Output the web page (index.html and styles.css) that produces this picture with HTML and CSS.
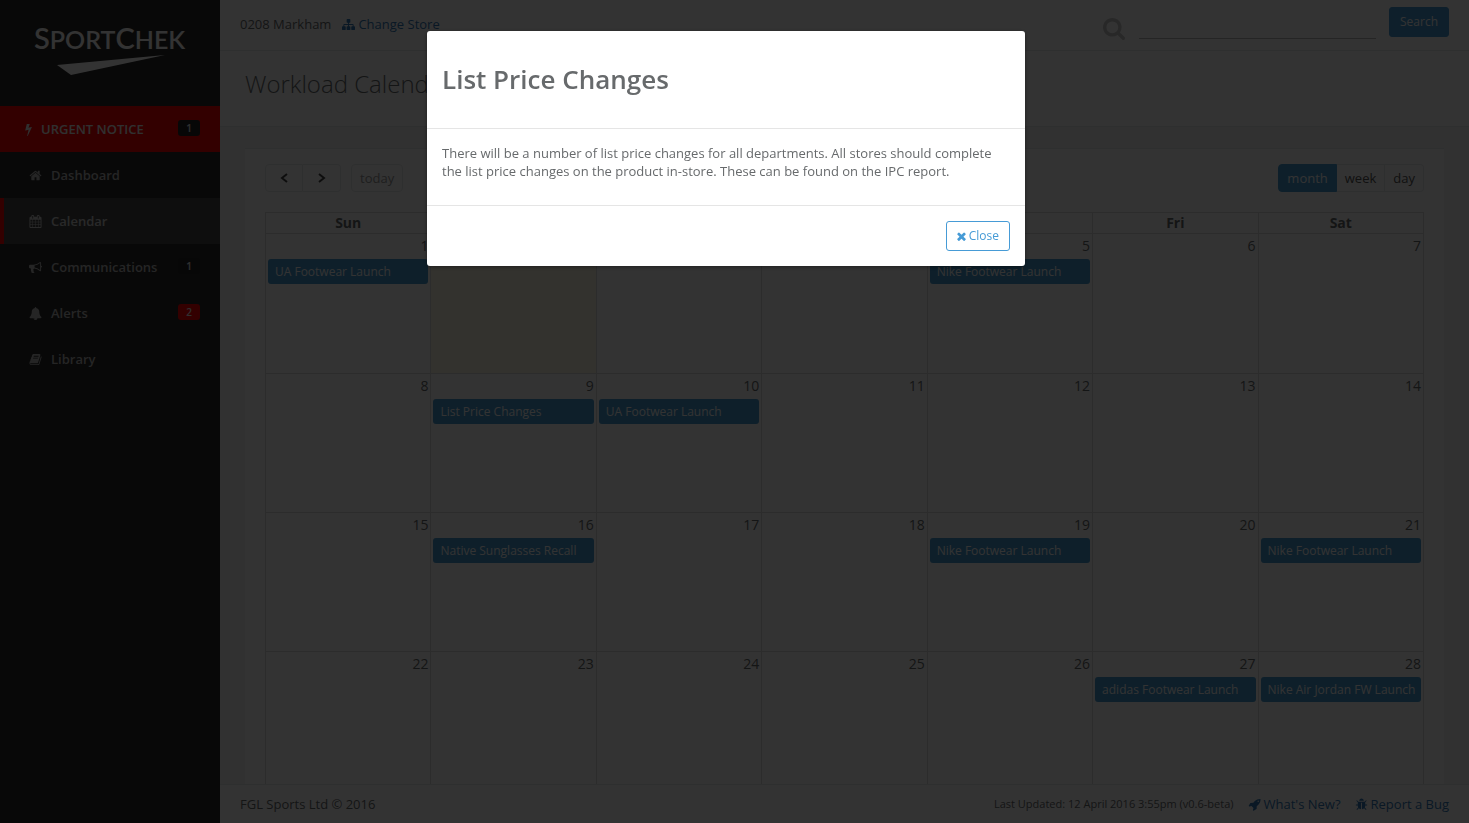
FILE: index.html
```html
<!DOCTYPE html>
<html lang="en">
<head>
<meta charset="utf-8">
<title>Workload Calendar</title>
<link rel="stylesheet" href="styles.css">
</head>
<body>
<div class="app">
  <aside class="sidebar">
    <div class="brand">
      <div class="brand-name"><span class="brand-cap">S</span>PORT<span class="brand-cap">C</span>HEK</div>
      <svg class="brand-mark" width="108" height="20" viewBox="0 0 108 20" aria-hidden="true"><path d="M0 10 L108 0 L14 20 Z"/></svg>
    </div>
    <nav class="nav">
      <a class="nav-item nav-urgent" href="#"><svg class="icon" viewBox="448 0 896 1792"><path d="M1333 566q18 20 7 44l-540 1157q-13 25-42 25-4 0-14-2-17-5-25.500-19t-4.500-30l197-808-406 101q-4 1-12 1-18 0-31-11-18-15-13-39l201-825q4-14 16-23t28-9h328q19 0 32 12.500t13 29.500q0 8-5 18l-171 463 396-98q8-2 12-2 19 0 34 15z"/></svg><span>URGENT NOTICE</span><span class="badge badge-dark">1</span></a>
      <a class="nav-item" href="#"><svg class="icon" viewBox="0 0 1792 1792"><path d="M1472 992v480q0 26-19 45t-45 19h-384v-384h-256v384h-384q-26 0-45-19t-19-45v-480q0-1 .5-3t.5-3l575-474 575 474q1 2 1 6zm223-69l-62 74q-8 9-21 11h-3q-13 0-21-7l-692-577-692 577q-12 8-24 7-13-2-21-11l-62-74q-8-10-7-23.500t11-21.500l719-599q32-26 76-26t76 26l244 204v-195q0-14 9-23t23-9h192q14 0 23 9t9 23v408l219 182q10 8 11 21.500t-7 23.500z"/></svg><span>Dashboard</span></a>
      <a class="nav-item nav-active" href="#"><svg class="icon" viewBox="0 0 1792 1792"><path d="M192 1664h288v-288h-288v288zm352 0h320v-288h-320v288zm-352-352h288v-320h-288v320zm352 0h320v-320h-320v320zm-352-384h288v-288h-288v288zm736 736h320v-288h-320v288zm-384-736h320v-288h-320v288zm768 736h288v-288h-288v288zm-384-352h320v-320h-320v320zm-352-864v-288q0-13-9.500-22.500t-22.500-9.500h-64q-13 0-22.500 9.500t-9.500 22.500v288q0 13 9.500 22.500t22.500 9.500h64q13 0 22.500-9.500t9.500-22.500zm736 864h288v-320h-288v320zm-384-384h320v-288h-320v288zm384 0h288v-288h-288v288zm32-480v-288q0-13-9.500-22.500t-22.500-9.500h-64q-13 0-22.500 9.500t-9.500 22.500v288q0 13 9.500 22.500t22.500 9.500h64q13 0 22.500-9.500t9.500-22.500zm384-64v1280q0 52-38 90t-90 38h-1408q-52 0-90-38t-38-90v-1280q0-52 38-90t90-38h128v-96q0-66 47-113t113-47h64q66 0 113 47t47 113v96h384v-96q0-66 47-113t113-47h64q66 0 113 47t47 113v96h128q52 0 90 38t38 90z"/></svg><span>Calendar</span></a>
      <a class="nav-item" href="#"><svg class="icon" viewBox="0 0 1792 1792"><path d="M1664 640q53 0 90.500 37.500t37.500 90.500-37.500 90.500-90.500 37.500v384q0 52-38 90t-90 38q-417-347-812-380-58 19-91 66t-31 100.500 40 92.500q-20 33-23 65.500t6 58 33.500 55 48 50 61.500 50.500q-29 58-111.500 83t-168.500 11.500-132-55.500q-7-23-29.500-87.500t-32-94.500-23-89-15-101 3.500-98.500 22-110.500h-122q-66 0-113-47t-47-113v-192q0-66 47-113t113-47h480q435 0 896-384 52 0 90 38t38 90v384zm-128 604v-954q-394 302-768 343v270q377 42 768 341z"/></svg><span>Communications</span><span class="badge badge-dark">1</span></a>
      <a class="nav-item" href="#"><svg class="icon" viewBox="0 0 1792 1792"><path d="M912 1696q0-16-16-16-59 0-101.500-42.500t-42.500-101.500q0-16-16-16t-16 16q0 73 51.500 124.500t124.500 51.500q16 0 16-16zm816-288q0 52-38 90t-90 38h-448q0 106-75 181t-181 75-181-75-75-181h-448q-52 0-90-38t-38-90q50-42 91-88t85-119.500 74.500-158.500 50-206 19.500-260q0-152 117-282.500t307-158.500q-8-19-8-39 0-40 28-68t68-28 68 28 28 68q0 20-8 39 190 28 307 158.500t117 282.500q0 139 19.500 260t50 206 74.500 158.500 85 119.500 91 88z"/></svg><span>Alerts</span><span class="badge badge-red">2</span></a>
      <a class="nav-item" href="#"><svg class="icon" viewBox="0 0 1792 1792"><path d="M1703 478q40 57 18 129l-275 906q-19 64-76.500 107.500t-122.500 43.500h-923q-77 0-148.500-53.500t-99.500-131.500q-24-67-2-127 0-4 3-27t4-37q1-8-3-21.500t-3-19.500q2-11 8-21t16.500-23.500 16.500-23.500q23-38 45-91.500t30-91.500q3-10 .5-30t-.5-28q3-11 17-28t17-23q21-36 42-92t25-90q1-9-2.500-32t.5-28q4-13 22-30.500t22-22.500q19-26 42.500-84.500t27.500-96.500q1-8-3-25.500t-2-26.500q2-8 9-18t18-23 17-21q8-12 16.500-30.500t15-35 16-36 19.500-32 26.500-23.500 36-11.500 47.500 5.500l-1 3q38-9 51-9h761q74 0 114 56t18 130l-274 906q-36 119-71.500 153.500t-128.500 34.500h-869q-27 0-38 15-11 16-1 43 24 70 144 70h923q29 0 56-15.500t35-41.500l300-987q7-22 5-57 38 15 59 43zm-1064 2q-4 13 2 22.500t20 9.500h608q13 0 25.500-9.500t16.500-22.500l21-64q4-13-2-22.500t-20-9.500h-608q-13 0-25.500 9.500t-16.500 22.500zm-83 256q-4 13 2 22.500t20 9.500h608q13 0 25.500-9.500t16.500-22.500l21-64q4-13-2-22.500t-20-9.500h-608q-13 0-25.500 9.500t-16.500 22.500z"/></svg><span>Library</span></a>
    </nav>
  </aside>

  <div class="page">
    <header class="topbar">
      <div class="store">
        <span>0208 Markham</span>
        <a class="link" href="#"><svg class="icon" viewBox="0 0 1792 1792"><path d="M1792 1248v320q0 40-28 68t-68 28h-320q-40 0-68-28t-28-68v-320q0-40 28-68t68-28h96v-192h-512v192h96q40 0 68 28t28 68v320q0 40-28 68t-68 28h-320q-40 0-68-28t-28-68v-320q0-40 28-68t68-28h96v-192h-512v192h96q40 0 68 28t28 68v320q0 40-28 68t-68 28h-320q-40 0-68-28t-28-68v-320q0-40 28-68t68-28h96v-192q0-52 38-90t90-38h512v-192h-96q-40 0-68-28t-28-68v-320q0-40 28-68t68-28h320q40 0 68 28t28 68v320q0 40-28 68t-68 28h-96v192h512q52 0 90 38t38 90v192h96q40 0 68 28t28 68z"/></svg>Change Store</a>
      </div>
      <form class="search">
        <label class="search-label" for="q" aria-label="Search"><svg class="search-icon" viewBox="64 128 1664 1664"><path d="M1216 832q0-185-131.500-316.500t-316.500-131.500-316.500 131.500-131.500 316.500 131.500 316.500 316.500 131.500 316.500-131.500 131.500-316.500zm512 832q0 52-38 90t-90 38q-54 0-90-38l-343-342q-179 124-399 124-143 0-273.500-55.500t-225-150-150-225-55.500-273.500 55.500-273.500 150-225 225-150 273.500-55.500 273.500 55.500 225 150 150 225 55.500 273.500q0 220-124 399l343 343q37 37 37 90z"/></svg></label>
        <input class="search-input" id="q" type="text">
        <button class="btn btn-primary" type="button">Search</button>
      </form>
    </header>
    <div class="heading"><h2 class="heading-title">Workload Calendar</h2></div>

    <main class="content">
      <section class="card">
        <div class="toolbar">
          <div class="toolbar-side">
            <div class="group">
              <button class="cal-btn cal-arrow" type="button" aria-label="Previous"><svg width="8" height="10" viewBox="0 0 8 10"><path d="M7 1 L2 5 L7 9"/></svg></button>
              <button class="cal-btn cal-arrow" type="button" aria-label="Next"><svg width="8" height="10" viewBox="0 0 8 10"><path d="M1 1 L6 5 L1 9"/></svg></button>
            </div>
            <div class="group"><button class="cal-btn cal-today" type="button" disabled>today</button></div>
          </div>
          <div class="group">
            <button class="cal-btn cal-on" type="button">month</button>
            <button class="cal-btn" type="button">week</button>
            <button class="cal-btn" type="button">day</button>
          </div>
        </div>
        <table class="month">
          <thead><tr><th>Sun</th><th>Mon</th><th>Tue</th><th>Wed</th><th>Thu</th><th>Fri</th><th>Sat</th></tr></thead>
          <tbody>
            <tr>
              <td><div class="day">1</div><a class="event" href="#">UA Footwear Launch</a></td>
              <td class="today"><div class="day">2</div></td>
              <td><div class="day">3</div></td>
              <td><div class="day">4</div></td>
              <td><div class="day">5</div><a class="event" href="#">Nike Footwear Launch</a></td>
              <td><div class="day">6</div></td>
              <td><div class="day">7</div></td>
            </tr>
            <tr>
              <td><div class="day">8</div></td>
              <td><div class="day">9</div><a class="event" href="#">List Price Changes</a></td>
              <td><div class="day">10</div><a class="event" href="#">UA Footwear Launch</a></td>
              <td><div class="day">11</div></td>
              <td><div class="day">12</div></td>
              <td><div class="day">13</div></td>
              <td><div class="day">14</div></td>
            </tr>
            <tr>
              <td><div class="day">15</div></td>
              <td><div class="day">16</div><a class="event" href="#">Native Sunglasses Recall</a></td>
              <td><div class="day">17</div></td>
              <td><div class="day">18</div></td>
              <td><div class="day">19</div><a class="event" href="#">Nike Footwear Launch</a></td>
              <td><div class="day">20</div></td>
              <td><div class="day">21</div><a class="event" href="#">Nike Footwear Launch</a></td>
            </tr>
            <tr>
              <td><div class="day">22</div></td>
              <td><div class="day">23</div></td>
              <td><div class="day">24</div></td>
              <td><div class="day">25</div></td>
              <td><div class="day">26</div></td>
              <td><div class="day">27</div><a class="event" href="#">adidas Footwear Launch</a></td>
              <td><div class="day">28</div><a class="event" href="#">Nike Air Jordan FW Launch</a></td>
            </tr>
          </tbody>
        </table>
      </section>
    </main>

    <footer class="footer">
      <span>FGL Sports Ltd © 2016</span>
      <div class="footer-side">
        <small class="updated">Last Updated: 12 April 2016 3:55pm (v0.6-beta)</small>
        <a class="link" href="#"><svg class="icon" viewBox="0 0 1664 1792"><path d="M1440 448q0-40-28-68t-68-28-68 28-28 68 28 68 68 28 68-28 28-68zm224-288q0 249-75.500 430.500t-253.500 360.500q-81 80-195 176l-20 379q-2 16-16 26l-384 224q-7 4-16 4-12 0-23-9l-64-64q-13-14-8-32l85-276-281-281-276 85q-3 1-9 1-14 0-23-9l-64-64q-17-19-5-39l224-384q10-14 26-16l379-20q96-114 176-195 188-187 358-258t431-71q14 0 24 9.500t10 22.500z"/></svg>What's New?</a>
        <a class="link" href="#"><svg class="icon" viewBox="0 0 1792 1792"><path d="M1696 960q0 26-19 45t-45 19h-224q0 171-67 290l208 209q19 19 19 45t-19 45q-18 19-45 19t-45-19l-198-197q-5 5-15 13t-42 28.500-65 36.500-82 29-97 13v-896h-128v896q-51 0-101.500-13.500t-87-33-66-39-43.500-32.500l-15-14-183 207q-20 21-48 21-24 0-43-16-19-18-20.500-44.500t15.500-46.500l202-227q-58-114-58-274h-224q-26 0-45-19t-19-45 19-45 45-19h224v-294l-173-173q-19-19-19-45t19-45 45-19 45 19l173 173h844l173-173q19-19 45-19t45 19 19 45-19 45l-173 173v294h224q26 0 45 19t19 45zm-480-576h-640q0-133 93.500-226.500t226.500-93.500 226.500 93.500 93.500 226.500z"/></svg>Report a Bug</a>
      </div>
    </footer>
  </div>
</div>

<div class="backdrop">
  <div class="modal" role="dialog" aria-modal="true" aria-labelledby="modal-title">
    <div class="modal-header"><h4 class="modal-title" id="modal-title">List Price Changes</h4></div>
    <div class="modal-body"><p class="modal-text">There will be a number of list price changes for all departments. All stores should complete the list price changes on the product in-store. These can be found on the IPC report.</p></div>
    <div class="modal-footer"><button class="btn btn-outline" type="button"><svg class="close-icon" viewBox="302 302 1188 1252"><path d="M1490 1322q0 40-28 68l-136 136q-28 28-68 28t-68-28l-294-294-294 294q-28 28-68 28t-68-28l-136-136q-28-28-28-68t28-68l294-294-294-294q-28-28-28-68t28-68l136-136q28-28 68-28t68 28l294 294 294-294q28-28 68-28t68 28l136 136q28 28 28 68t-28 68l-294 294 294 294q28 28 28 68z"/></svg>Close</button></div>
  </div>
</div>
</body>
</html>
```

FILE: styles.css
```css
* { box-sizing: border-box; }
body {
  margin: 0;
  font-family: "Open Sans", "Noto Sans", sans-serif;
  font-size: 13px;
  line-height: 18px;
  color: #676a6c;
  background: #2a2a2a;
  overflow: hidden;
}
a { text-decoration: none; }
button, input { font-family: inherit; }

.app { display: flex; height: 100vh; }
.icon { width: 13px; height: 13px; fill: currentColor; flex: none; }

/* Sidebar */
.sidebar { width: 220px; flex: none; background: #2a2a2a; }
.brand { height: 106px; padding: 20px 0 0 34px; }
.brand-name {
  height: 35px;
  font-family: Lato, sans-serif;
  font-size: 25px;
  font-weight: 600;
  line-height: 35px;
  color: #fff;
  white-space: nowrap;
}
.brand-cap { font-size: 29px; }
.brand-mark { display: block; margin-left: 23px; fill: #fff; }
.nav-item {
  display: flex;
  align-items: center;
  gap: 9px;
  height: 46px;
  padding: 0 20px 0 29px;
  font-weight: 600;
  color: #b8b8b8;
}
.nav-urgent { padding-left: 25px; background: #f00; color: #eee; }
.nav-urgent .icon { width: 7px; }
.nav-active { padding-left: 25px; border-left: 4px solid #f00; background: #484848; color: #ccc; }
.badge {
  margin-left: auto;
  margin-bottom: 2px;
  width: 22px;
  border-radius: 3px;
  font-size: 10px;
  line-height: 16px;
  text-align: center;
  color: #eee;
}
.badge-dark { background: #262626; }
.badge-red { background: #f00; }

/* Page */
.page { flex: 1; min-width: 0; display: flex; flex-direction: column; background: #f3f3f4; }
.topbar {
  display: flex;
  justify-content: space-between;
  flex: none;
  height: 51px;
  padding: 0 20px;
  background: #fff;
  border-bottom: 1px solid #e7eaec;
}
.store { display: flex; align-items: center; gap: 11px; height: 48px; }
.link { display: inline-flex; align-items: center; gap: 3px; color: #337ab7; }
.search { display: flex; align-items: flex-start; padding-top: 7px; }
.search-label { padding: 11px 14px 0 0; }
.search-icon { display: block; width: 22px; height: 22px; fill: #c8c8c8; }
.search-input {
  width: 237px;
  height: 32px;
  margin-right: 13px;
  border: 0;
  border-bottom: 1px solid #bbb;
  background: none;
  font-size: 13px;
}
.btn {
  display: inline-flex;
  align-items: center;
  justify-content: center;
  gap: 3px;
  height: 30px;
  padding: 0 10px;
  border: 1px solid #469bd6;
  border-radius: 3px;
  font-size: 12px;
  line-height: 18px;
}
.btn-primary { background: #469bd6; color: #fff; }
.btn-outline { background: #fff; color: #469bd6; }
.heading {
  flex: none;
  height: 76px;
  padding: 16px 25px;
  background: #fff;
  border-bottom: 1px solid #e7eaec;
}
.heading-title { margin: 0; font-size: 24px; font-weight: 300; line-height: 34px; }
.content { flex: 1; min-height: 0; overflow: hidden; padding: 21px 25px 0; }
.card { min-height: 100%; padding: 15px 20px; background: #fff; border-top: 1px solid #e7eaec; }

/* Calendar */
.toolbar { display: flex; justify-content: space-between; margin-bottom: 20px; }
.toolbar-side { display: flex; gap: 10px; }
.group { display: flex; }
.cal-btn {
  height: 28px;
  padding: 0 8px;
  border: 1px solid #e7eaec;
  border-left-width: 0;
  background: #fff;
  color: #555;
  font-size: 13px;
}
.cal-btn:first-child { border-left-width: 1px; border-radius: 4px 0 0 4px; }
.cal-btn:last-child { border-radius: 0 4px 4px 0; }
.cal-btn:only-child { border-radius: 4px; }
.cal-arrow { width: 38px; }
.cal-arrow svg { fill: none; stroke: #444; stroke-width: 2; }
.cal-today { color: #999; }
.cal-on { background: #469bd2; border-color: #469bd2; color: #fff; }
.month { width: 100%; table-layout: fixed; border-collapse: collapse; font-size: 14px; }
.month th, .month td { padding: 0; border: 1px solid #ddd; }
.month th { height: 21px; line-height: 20px; font-weight: 700; }
.month td { height: 139px; vertical-align: top; }
.month tbody tr:first-child td { height: 140px; }
.today { background: #fcf8e3; }
.day { padding: 2px 2px 3px; line-height: 20px; text-align: right; }
.event {
  display: block;
  margin: 0 2px;
  padding: 4px 7px 3px;
  border-radius: 3px;
  background: #469bd2;
  color: #fff;
  font-size: 12px;
  line-height: 18px;
  white-space: nowrap;
  overflow: hidden;
}

/* Footer */
.footer {
  display: flex;
  justify-content: space-between;
  flex: none;
  padding: 10px 20px;
  background: #fff;
  border-top: 1px solid #e7eaec;
}
.footer-side { display: flex; align-items: center; gap: 14px; }
.updated { font-size: 11px; }

/* Modal */
.backdrop {
  position: fixed;
  inset: 0;
  display: flex;
  justify-content: center;
  align-items: flex-start;
  padding: 31px 17px 0 0;
  background: rgba(0, 0, 0, 0.8);
}
.modal {
  width: 598px;
  background: #fff;
  border-radius: 3px;
  box-shadow: 0 1px 4px rgba(0, 0, 0, 0.4);
}
.modal-header { padding: 30px 15px; border-bottom: 1px solid #e5e5e5; }
.modal-title { margin: 0; font-size: 26px; font-weight: 600; line-height: 37px; }
.modal-body { padding: 15px 15px 25px; }
.modal-text { margin: 0; }
.modal-footer { display: flex; justify-content: flex-end; padding: 15px; border-top: 1px solid #e5e5e5; }
.close-icon { width: 9px; height: 9px; fill: currentColor; }
```
